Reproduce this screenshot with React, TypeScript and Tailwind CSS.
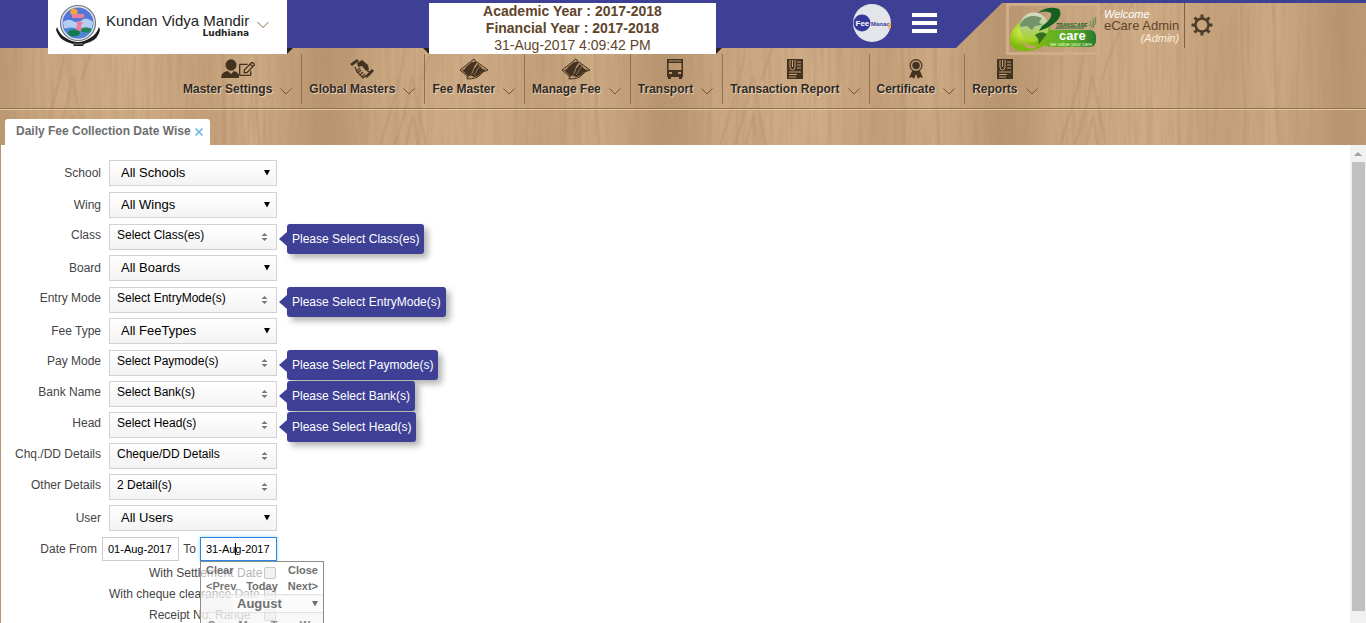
import React from "react";
import { FaRegEdit } from "react-icons/fa";

function Wood() {
  return (
    <svg className="col-start-1 row-start-1 h-0 min-h-full w-full" aria-hidden="true">
      <defs>
        <linearGradient id="plank">
          <stop offset="0" stopColor="#b8956f" />
          <stop offset="0.07" stopColor="#bd9a74" />
          <stop offset="0.16" stopColor="#c9a680" />
          <stop offset="0.45" stopColor="#cfac86" />
          <stop offset="0.65" stopColor="#c4a07a" />
          <stop offset="0.8" stopColor="#ccaa84" />
          <stop offset="0.93" stopColor="#c19d77" />
          <stop offset="1" stopColor="#b8956f" />
        </linearGradient>
        <filter id="grain" x="0" y="0" width="100%" height="100%">
          <feTurbulence type="fractalNoise" baseFrequency="0.22 0.012" numOctaves="3" seed="4" />
          <feColorMatrix values="0 0 0 0 0.42  0 0 0 0 0.28  0 0 0 0 0.15  0.9 0 0 0 -0.36" />
        </filter>
        <pattern id="wood" x="-18" width="340" height="170" patternUnits="userSpaceOnUse">
          <rect width="340" height="170" fill="url(#plank)" />
          <g fill="none" stroke="#9a7650" strokeOpacity="0.16" strokeWidth="3">
            <path d="M52 170C60 130 78 95 84 40M66 170C76 130 86 110 90 75C97 110 102 140 110 170M78 170C84 145 88 130 91 115C95 140 98 155 99 170" />
            <path d="M84 40C92 15 104 10 112 0M100 80C108 50 118 30 132 0M270 0C276 40 270 90 280 170M240 0C236 50 248 100 240 170" />
          </g>
        </pattern>
      </defs>
      <rect width="100%" height="100%" fill="url(#wood)" />
      <rect width="100%" height="100%" filter="url(#grain)" />
    </svg>
  );
}

function SchoolCrest() {
  return (
    <svg viewBox="0 0 46 44" className="h-11 w-[46px] shrink-0" aria-hidden="true">
      <circle cx="22" cy="20" r="17.5" fill="#dfe3e8" stroke="#6f7780" strokeWidth="1.2" />
      <circle cx="22" cy="20" r="15.5" fill="#5277d8" />
      <path d="M7 19q5-4 10-1t9-1 11 2l-1 7q-6-3-13 0T8 25z" fill="#b5cdf2" />
      <path d="M8 26q7-3 14 0t14-1q-3 8-10 10-12 2-18-9z" fill="#4f86d8" />
      <circle cx="18" cy="9" r="3.6" fill="#f3a53a" />
      <path d="M16 11h12v4H16zM21 18l6 1-2 4 2 5h-8l2-5z" fill="#ee7f9c" />
      <ellipse cx="18" cy="30" rx="6" ry="3.4" fill="#177a4c" />
      <ellipse cx="30" cy="27" rx="5" ry="2.6" fill="#1d8654" />
      <path d="M1 24q3 8 9 11 6 4 12 4t12-4q6-3 9-11l1 3q-2 9-10 12l-6 2-1 2H18l-1-2-6-2Q3 36 0 27z" fill="#1d1d1f" />
      <path d="M17 41h10" stroke="#888" />
    </svg>
  );
}

function FeeLogo() {
  return (
    <svg viewBox="0 0 40 40" className="h-10 w-10" role="img" aria-label="Fee Manager">
      <circle cx="20" cy="20" r="19" fill="#e3e5ea" />
      <circle cx="10" cy="20" r="8.5" fill="#33389a" />
      <text x="3.5" y="23" fontSize="8" fontWeight="bold" fill="#fff" fontFamily="Liberation Sans, sans-serif">Fee</text>
      <text x="19" y="23" fontSize="6" fontWeight="bold" fill="#3b3f9b" fontFamily="Liberation Sans, sans-serif">Manac</text>
      <path d="M37 20l2-1v6l-3 1z" fill="#efb54a" />
    </svg>
  );
}

function ECareLogo() {
  return (
    <svg viewBox="0 0 88 45" className="h-[45px] w-[88px]" role="img" aria-label="Transcare eCare">
      <defs>
        <radialGradient id="leaf" cx="0.35" cy="0.35">
          <stop offset="0" stopColor="#e4f650" />
          <stop offset="1" stopColor="#7fb80e" />
        </radialGradient>
        <linearGradient id="pill">
          <stop offset="0" stopColor="#72b61c" />
          <stop offset="0.6" stopColor="#55a82a" />
          <stop offset="1" stopColor="#26792b" />
        </linearGradient>
        <linearGradient id="globe" x2="0" y2="1">
          <stop offset="0" stopColor="#d5dccb" />
          <stop offset="0.5" stopColor="#b4cf83" />
          <stop offset="1" stopColor="#a4d61c" />
        </linearGradient>
      </defs>
      <path d="M12 14Q-1 24 1 36q4 10 18 8 16-2 22-11 4-10-5-19z" fill="url(#leaf)" />
      <rect x="34" y="23" width="53" height="17" rx="6" fill="url(#pill)" />
      <circle cx="25" cy="20" r="14.5" fill="url(#globe)" />
      <path d="M13 14q8-8 20-3l-3 4 3 3-7 1-3 4-5-4-7 1q0-4 2-6z" fill="#74936a" />
      <path d="M26 28q6-5 12-1l-4 5-4 5-1-5z" fill="#34701f" />
      <path d="M12 34q7 6 16 4-2 5-9 3-5-2-7-7z" fill="#c79c70" />
      <path fillRule="evenodd" d="M28 6Q40-2 50 2q6 9-12 19l-8 3 3-5Q44 12 42 6q-5-3-14 0z" fill="#156020" />
      <path d="M47 22v-1h28" stroke="#216c2a" fill="none" />
      <text x="47" y="20" fontSize="5" fontStyle="italic" fontWeight="bold" fill="#1d6226" fontFamily="Liberation Sans, sans-serif">TRANSCARE</text>
      <path d="M80 19q3-2 1-5M82 20q4-3 2-8M84 21q4-5 2-11" stroke="#39863a" fill="none" strokeWidth="0.8" />
      <text x="50" y="33" fontSize="13" fontWeight="bold" fill="#fff" fontFamily="Liberation Sans, sans-serif">care</text>
      <text x="41" y="39" fontSize="5" fill="#eaf8cf" fontFamily="Liberation Sans, sans-serif">we value your care</text>
    </svg>
  );
}

function Gear() {
  return (
    <svg viewBox="0 0 22 22" className="h-[22px] w-[22px]" fill="none" stroke="#4d3b2a" aria-hidden="true">
      <circle cx="11" cy="11" r="6.5" strokeWidth="2.4" />
      <path d="M11 4V0.5M11 18v3.5M4 11H0.5M18 11h3.5M6 6L3.5 3.5M16 6l2.5-2.5M6 16l-2.5 2.5M16 16l2.5 2.5" strokeWidth="3" />
    </svg>
  );
}

function Chevron({ className }: { className: string }) {
  return (
    <svg viewBox="0 0 12 7" className={className} fill="none" stroke="currentColor" aria-hidden="true">
      <path d="M0.5 0.5L6 6l5.500-5.500" />
    </svg>
  );
}

const Settings = () => (
  <span className="flex h-[22px] items-center">
    <svg viewBox="0 0 18 20" className="h-5 w-[18px]" fill="currentColor" aria-hidden="true">
      <ellipse cx="10" cy="6" rx="5.5" ry="5.8" />
      <path d="M0 19q0-6 7-7l3 3 3-3q4 1 5 4v3z" />
    </svg>
    <FaRegEdit className="h-4 w-4" />
  </span>
);

const Hands = () => (
  <svg viewBox="0 0 26 22" className="h-[22px] w-[26px]" aria-hidden="true">
    <path d="M1 6l7-5 2 2-7 5zM16 18l7-7 2 2-7 7z" fill="currentColor" />
    <path d="M8 5l5-3 6 5 1 5-3 1-4-5-4 1z" fill="currentColor" />
    <path d="M6 9l2 5 6 6 3-2M9 15l3-3M11 17l3-3M13 19l3-3M8 13l3-3M18 13l3 1" fill="none" stroke="currentColor" strokeWidth="1.2" />
  </svg>
);

const Money = () => (
  <svg viewBox="0 0 30 22" className="h-[22px] w-[30px]" aria-hidden="true">
    <path d="M1 12L15 1l6 8L9 19z" fill="#b7956e" stroke="currentColor" />
    <path d="M3 12q3 0 4-3l6-5q2 1 3-1l4 6-6 3-3 5-2 1z" fill="currentColor" />
    <path d="M8 19q4-1 5-6t5-9l11 8q-5 1-8 5t-13 4z" fill="#b7956e" stroke="currentColor" />
    <path d="M11 17q3-1 4-6l4-5 3 3q0 2 5 3l-5 3q-2 3-7 4z" fill="currentColor" />
    <path d="M15 17q2-2 3-5l3-4" fill="none" stroke="#b7956e" strokeWidth="0.7" />
  </svg>
);

const Bus = () => (
  <svg viewBox="0 0 18 22" className="h-[22px] w-[18px]" aria-hidden="true">
    <path fill="currentColor" fillRule="evenodd" d="M1 1h16v18h-1v2h-3v-2H5v2H2v-2H1zM2.500 5v7h13V5zM3 2.500v1h12v-1zM3 14v2h3v-2zM12 14v2h3v-2z" />
  </svg>
);

const Report = () => (
  <svg viewBox="0 0 18 22" className="h-[22px] w-[18px]" aria-hidden="true">
    <path d="M1 1h16v20H1z" fill="currentColor" />
    <path d="M4 2v7q0 3 2.500 3T9 9V2M6.500 2v7M11 4h4M11 7h4M11 10h4M3 14h12M3 16.500h8M3 19h7" fill="none" stroke="#c4a17b" />
  </svg>
);

const Medal = () => (
  <svg viewBox="0 0 16 22" className="h-[22px] w-4" aria-hidden="true">
    <path d="M4 13l-3 7 3-1 2 2 2-5 2 5 2-2 3 1-3-7z" fill="currentColor" />
    <circle cx="8" cy="7.500" r="6.500" fill="currentColor" />
    <circle cx="8" cy="7.500" r="4.500" fill="none" stroke="#c4a17b" strokeWidth="1.500" />
  </svg>
);

const menu = [
  { label: "Master Settings", Icon: Settings },
  { label: "Global Masters", Icon: Hands },
  { label: "Fee Master", Icon: Money },
  { label: "Manage Fee", Icon: Money },
  { label: "Transport", Icon: Bus },
  { label: "Transaction Report", Icon: Report },
  { label: "Certificate", Icon: Medal },
  { label: "Reports", Icon: Report },
];

function Header() {
  return (
    <header className="grid shrink-0 grid-cols-1">
      <Wood />
      <div className="col-start-1 row-start-1 flex flex-col">
        <div className="grid h-12 grid-cols-1">
          <div className="col-start-1 row-start-1 flex h-12">
            <div className="flex-1 bg-[#3e4095] [clip-path:polygon(0_0,100%_0,100%_3px,calc(100%_-_46px)_100%,0_100%)]" />
            <div className="h-[3px] w-[364px] bg-[#3e4095]" />
          </div>
          <div className="z-10 col-start-1 row-start-1 flex items-start">
            <div className="flex flex-1 items-start justify-between pr-[65px] pl-12">
              <div className="flex items-end">
                <button className="flex h-[54px] w-[239px] items-center gap-1 bg-white pb-1 pl-2 text-left">
                  <SchoolCrest />
                  <span className="flex flex-col items-end text-[#222]">
                    <span className="text-[15px] leading-4 whitespace-nowrap">Kundan Vidya Mandir</span>
                    <span className="text-[9px] leading-2 font-bold font-['DejaVu_Sans',sans-serif]">Ludhiana</span>
                  </span>
                  <Chevron className="ml-1 h-2 w-3 shrink-0 text-[#8a6a4a]" />
                </button>
                <span className="h-1.5 w-1.5 bg-[#2b2520] [clip-path:polygon(0_0,100%_0,0_100%)]" />
              </div>
              <div className="flex items-end pt-[3px]">
                <span className="h-1.5 w-1.5 bg-[#2b2520] [clip-path:polygon(0_0,100%_0,100%_100%)]" />
                <div className="h-[51px] w-[287px] bg-white text-center text-[14px] leading-[17px] text-[#5e452b]">
                  <p className="font-bold">Academic Year : 2017-2018</p>
                  <p className="font-bold">Financial Year : 2017-2018</p>
                  <p>31-Aug-2017 4:09:42 PM</p>
                </div>
                <span className="h-1.5 w-1.5 bg-[#2b2520] [clip-path:polygon(0_0,100%_0,0_100%)]" />
              </div>
              <div className="flex items-center gap-5 pt-[3px]">
                <FeeLogo />
                <button aria-label="Menu" className="flex w-[25px] flex-col gap-1">
                  <span className="h-1 bg-white" />
                  <span className="h-1 bg-white" />
                  <span className="h-1 bg-white" />
                </button>
              </div>
            </div>
            <div className="flex w-[364px] items-start pt-[3px] pl-1">
              <a href="#" className="border-3 border-[#d0ad88] pt-px"><ECareLogo /></a>
              <div className="flex h-[45px] flex-col border-r border-[#7d6246] pt-[5px] pr-[5px] pl-1 text-[11px] leading-3 text-white">
                <em>Welcome</em>
                <span className="text-[13px] text-[#5e452b]">eCare Admin</span>
                <em className="self-end text-[#fdeedd]">(Admin)</em>
              </div>
              <button aria-label="Settings" className="pt-[11px] pl-1.5"><Gear /></button>
            </div>
          </div>
        </div>
        <nav className="flex h-[61px] border-b border-[#8e7150] pt-1.5 pl-[177px] shadow-[0_1px_0_#e2c8a7]">
          {menu.map(({ label, Icon }) => (
            <a key={label} href="#" className="flex h-[50px] flex-col items-center border-r border-[#8e7150] pt-1 pr-[9px] pl-[7px] text-[#43321f] first:pl-1.5 last:border-0">
              <Icon />
              <span className="flex items-center gap-2 text-[12px] leading-[18px] font-bold whitespace-nowrap text-[#33291f] [text-shadow:1px_1px_1px_#ecd9c0]">
                {label}
                <Chevron className="mt-1 h-[7px] w-3 text-[#6f563d]" />
              </span>
            </a>
          ))}
        </nav>
        <div className="flex px-[5px] pt-2.5">
          <div className="flex h-[26px] items-center gap-1 rounded-t-[3px] bg-white pr-[7px] pb-0.5 pl-[11px] text-[12px] font-bold text-[#6e6e6e]">
            Daily Fee Collection Date Wise
            <button aria-label="Close tab" className="text-[#62b3e8]">
              <svg viewBox="0 0 8 8" className="mt-0.5 h-2 w-2" stroke="currentColor" strokeWidth="1.500">
                <path d="M0.500 0.500l7 7M7.500 0.500l-7 7" />
              </svg>
            </button>
          </div>
        </div>
      </div>
    </header>
  );
}

type Field = { id: string; label: string; value: string; multi?: boolean; hint?: string };

const fields: Field[] = [
  { id: "school", label: "School", value: "All Schools" },
  { id: "wing", label: "Wing", value: "All Wings" },
  { id: "class", label: "Class", value: "Select Class(es)", multi: true, hint: "Please Select Class(es)" },
  { id: "board", label: "Board", value: "All Boards" },
  { id: "entry", label: "Entry Mode", value: "Select EntryMode(s)", multi: true, hint: "Please Select EntryMode(s)" },
  { id: "fee", label: "Fee Type", value: "All FeeTypes" },
  { id: "pay", label: "Pay Mode", value: "Select Paymode(s)", multi: true, hint: "Please Select Paymode(s)" },
  { id: "bank", label: "Bank Name", value: "Select Bank(s)", multi: true, hint: "Please Select Bank(s)" },
  { id: "head", label: "Head", value: "Select Head(s)", multi: true, hint: "Please Select Head(s)" },
  { id: "cheque", label: "Chq./DD Details", value: "Cheque/DD Details", multi: true },
  { id: "other", label: "Other Details", value: "2 Detail(s)", multi: true },
  { id: "user", label: "User", value: "All Users" },
];

function MultiRow({ id, label, value, hint }: Field) {
  return (
    <div className="flex gap-2 pb-[5px]">
      <label htmlFor={id} className="w-[100px] pt-[3px] text-right leading-4">{label}</label>
      <div className="relative flex">
        <button id={id} className="flex h-[26px] w-[168px] items-center justify-between border border-[#d2d2d2] bg-linear-to-b from-white to-[#f3f3f3] pr-2 pl-[7px] text-black">
          <span className="pb-1">{value}</span>
          <svg viewBox="0 0 7 8" className="h-2 w-[7px] fill-[#777]" aria-hidden="true">
            <path d="M3.500 0L6.500 3h-6zM3.500 8L6.500 5h-6z" />
          </svg>
        </button>
        {hint && (
          <div role="tooltip" className="absolute top-0 left-full ml-[10px] h-[30px] rounded-[3px] bg-[#3e4095] px-[5px] leading-[30px] whitespace-nowrap text-white shadow-[4px_4px_6px_rgba(0,0,0,0.3)]">
            <span className="absolute top-2 -left-2 h-3.5 w-2 bg-[#3e4095] [clip-path:polygon(100%_0,100%_100%,0_50%)]" />
            {hint}
          </div>
        )}
      </div>
    </div>
  );
}

function SelectRow({ id, label, value }: Field) {
  return (
    <div className="flex items-center gap-2 pb-1.5">
      <label htmlFor={id} className="w-[100px] text-right leading-4">{label}</label>
      <div className="grid">
        <select id={id} className="col-start-1 row-start-1 h-[26px] w-[168px] appearance-none border border-[#d2d2d2] bg-linear-to-b from-white to-[#f3f3f3] pl-[11px] text-[13px] text-black">
          <option>{value}</option>
        </select>
        <svg viewBox="0 0 7 7" className="pointer-events-none col-start-1 row-start-1 mr-[7px] h-[6px] w-[6px] self-center justify-self-end" aria-hidden="true">
          <path d="M0 0h7L3.500 6.500z" />
        </svg>
      </div>
    </div>
  );
}

function Calendar() {
  return (
    <div className="absolute top-full left-0 w-[124px] border border-[#8c8c8c] bg-white/60 text-[11px] leading-4 font-bold text-[#6f6f6f]">
      <div className="flex justify-between px-[5px]">
        <button>Clear</button>
        <button>Close</button>
      </div>
      <div className="flex justify-between px-[5px]">
        <button className="text-[#777]">&lt;Prev</button>
        <button>Today</button>
        <button>Next&gt;</button>
      </div>
      <div className="flex h-[19px] items-center border-y border-[#e2e2e2] bg-[#eee]/50">
        <span className="w-8" />
        <span className="grid flex-1 bg-white/50">
          <select aria-label="Month" className="col-start-1 row-start-1 w-full appearance-none pl-1 text-[13px] leading-4">
            <option>August</option>
          </select>
          <svg viewBox="0 0 7 7" className="pointer-events-none col-start-1 row-start-1 mr-[5px] h-[6px] w-[6px] self-center justify-self-end fill-[#6f6f6f]" aria-hidden="true">
            <path d="M0 0h7L3.500 6.500z" />
          </svg>
        </span>
      </div>
      <div className="flex justify-between bg-[#f2f2f2]/50 px-[7px] pt-1 text-[#888]">
        <span>Su</span><span>Mo</span><span>Tu</span><span>We</span>
      </div>
    </div>
  );
}

const checks = [
  { id: "settle", label: "With Settlement Date", pad: "pl-[148px]" },
  { id: "clear", label: "With cheque clearance Date", pad: "pl-[108px]" },
  { id: "range", label: "Receipt No. Range", pad: "pl-[148px]" },
];

export default function App() {
  return (
    <div className="flex h-screen flex-col overflow-hidden bg-white font-['Liberation_Sans',Arial,sans-serif] text-[12px] text-[#444]">
      <Header />
      <main className="flex min-h-0 flex-1 border-l border-[#b8956f]">
        <form className="min-w-0 flex-1 overflow-hidden pt-[15px]">
          {fields.map((f) => (f.multi ? <MultiRow key={f.id} {...f} /> : <SelectRow key={f.id} {...f} />))}
          <div className="flex h-6 items-center">
            <label htmlFor="from" className="w-24 text-right">Date From</label>
            <input id="from" defaultValue="01-Aug-2017" className="ml-[5px] h-6 w-[77px] border border-[#ccc] px-[5px] text-[11px] text-black" />
            <label htmlFor="to" className="w-[21px] text-center">To</label>
            <div className="relative flex">
              <input id="to" defaultValue="31-Aug-2017" className="h-6 w-[77px] border border-[#2b86e3] px-[5px] text-[11px] text-black shadow-[0_0_4px_#9bd8ef]" />
              <span className="absolute top-1.5 left-[35px] h-3 w-px bg-black" />
              <Calendar />
            </div>
          </div>
          <div className="pt-px">
            {checks.map((c) => (
              <div key={c.id} className={"flex h-[21px] w-[275px] items-center justify-between " + c.pad}>
                <label htmlFor={c.id} className="whitespace-nowrap">{c.label}</label>
                <input id={c.id} type="checkbox" className="h-3 w-3 shrink-0 appearance-none rounded-xs border border-[#777] bg-[#ddd]" />
              </div>
            ))}
          </div>
        </form>
        <div className="flex w-4 flex-col items-center bg-[#f1f1f1]" aria-hidden="true">
          <svg viewBox="0 0 8 17" className="h-[17px] w-2 shrink-0 fill-[#a0a0a0]">
            <path d="M4 7l4 4H0z" />
          </svg>
          <div className="mb-3 w-[13px] flex-1 bg-[#c1c1c1]" />
        </div>
      </main>
    </div>
  );
}
